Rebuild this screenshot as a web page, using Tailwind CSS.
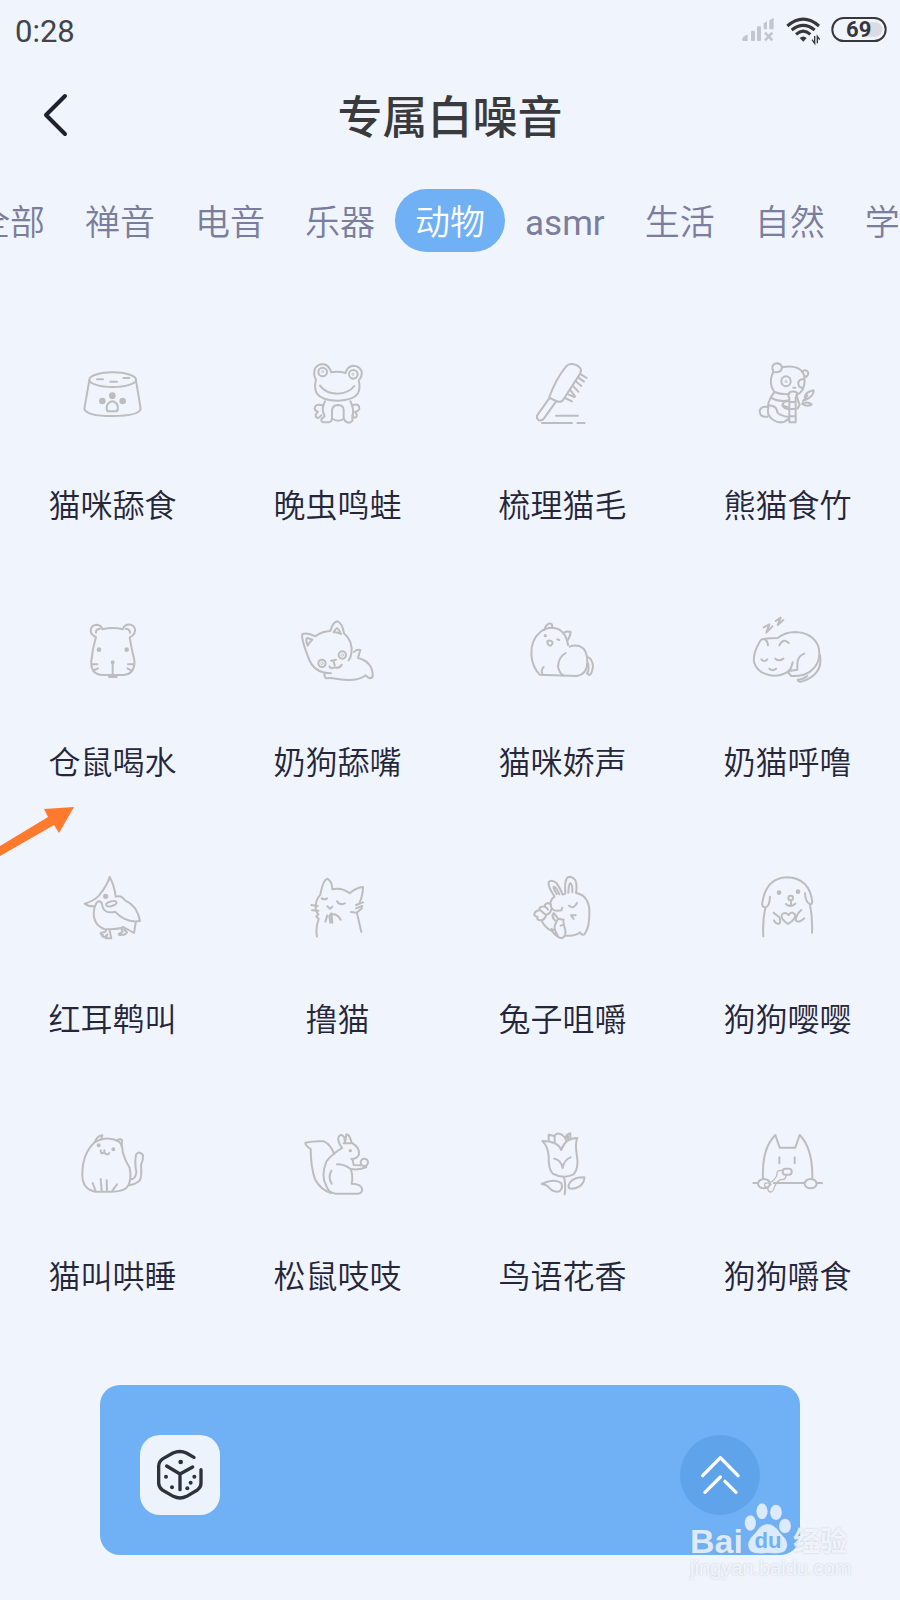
<!DOCTYPE html>
<html lang="zh-CN">
<head>
  <meta charset="UTF-8" />
  <meta name="viewport" content="width=device-width, initial-scale=1" />
  <title>专属白噪音</title>
  <script src="https://cdn.jsdelivr.net/npm/@tailwindcss/browser@4"></script>
</head>
<body class="relative min-h-screen overflow-x-hidden bg-[#f0f4fc] font-['Roboto','Noto_Sans_CJK_SC',sans-serif] text-[#26263a]">

  <!-- status bar -->
  <div class="flex h-[60px] items-center justify-between pl-[15px] pr-[13px]">
    <span class="pt-1 text-[31px] leading-[56px] text-[#444448]">0:28</span>
    <svg class="h-8 w-[147px]" viewBox="870 42 441 96" fill="none">
      <g fill="#c3c6ce">
        <path d="M876 118 Q878 108 893 104 V123 H880 Q876 122 876 118Z" />
        <rect x="903" y="92" width="12" height="31" rx="3" />
        <rect x="921" y="79" width="12" height="44" rx="3" />
        <path d="M941 70 L951 64 V88 H941Z M958 61 L971 53 V88 H958Z" />
      </g>
      <path d="M945 98 L967 121 M967 98 L945 121" stroke="#c3c6ce" stroke-width="8" />
      <g stroke="#37373b" stroke-width="9">
        <path d="M1012 78 Q1060 37 1107 78" />
        <path d="M1025 90 Q1060 62 1094 90" />
        <path d="M1038 103 Q1060 84 1081 103" />
      </g>
      <path d="M1049 114 Q1060 105 1070 114 L1060 125Z" fill="#37373b" />
      <path d="M1094 108 V130 L1086 119 M1102 130 V109 L1109 119" stroke="#37373b" stroke-width="4" />
      <path d="M1250 67 H1276 A21 21 0 0 1 1276 110 H1250Z" fill="#d9dce3" />
      <rect x="1147" y="54" width="160" height="69" rx="34" stroke="#37373b" stroke-width="6" />
      <text x="1226" y="112" text-anchor="middle" font-size="66" font-weight="700" fill="#37373b">69</text>
    </svg>
  </div>

  <header class="relative flex h-28 items-center justify-center border-b-2 border-[#f1f4f8]">
    <button type="button" aria-label="返回" class="absolute left-[35px] flex size-10 items-center justify-center">
      <svg class="h-11 w-7" viewBox="0 0 28 44" fill="none" stroke="#20212f" stroke-width="4" stroke-linecap="round" stroke-linejoin="round">
        <path d="M24 3 L5 22 L24 41" />
      </svg>
    </button>
    <h1 class="pt-2 text-[45px] font-medium text-[#3a3a3c]">专属白噪音</h1>
  </header>

  <nav class="overflow-hidden pt-[17px]">
    <div class="-ml-[45px] flex text-[35px] leading-[57px] font-[350] whitespace-nowrap text-[#7b7d9c]">
      <button type="button" class="shrink-0 px-5 pt-1.5">全部</button>
      <button type="button" class="shrink-0 px-5 pt-1.5">禅音</button>
      <button type="button" class="shrink-0 px-5 pt-1.5">电音</button>
      <button type="button" class="shrink-0 px-5 pt-1.5">乐器</button>
      <button type="button" class="shrink-0 rounded-full bg-[#70b0f4] px-5 pt-1.5 text-white">动物</button>
      <button type="button" class="shrink-0 px-5 pt-1.5 font-normal">asmr</button>
      <button type="button" class="shrink-0 px-5 pt-1.5">生活</button>
      <button type="button" class="shrink-0 px-5 pt-1.5">自然</button>
      <button type="button" class="shrink-0 px-5 pt-1.5">学习</button>
    </div>
  </nav>

  <main class="mt-[102px] grid grid-cols-4 gap-y-[81px] text-[32px] leading-[48px] font-[350]">

    <button type="button" class="flex flex-col items-center gap-[48px]">
      <svg class="size-20" viewBox="69 42 240 240" fill="none" stroke="#bdbdbf" stroke-width="6" stroke-linecap="round" stroke-linejoin="round">
        <ellipse cx="188" cy="119" rx="70" ry="22" />
        <path d="M118 121 L103 206 Q108 228 188 228 Q268 228 272 206 L258 121" />
        <path d="M141 118 H159 M181 125 H201 M220 114 H238" />
        <g fill="#bdbdbf"><circle cx="187" cy="167" r="7" /><circle cx="157" cy="183" r="7" /><circle cx="218" cy="183" r="7" /></g>
        <path d="M173 214 Q167 206 172 194 Q180 184 187 184 Q194 184 202 194 Q206 206 201 214 Z" />
      </svg>
      <span>猫咪舔食</span>
    </button>

    <button type="button" class="flex flex-col items-center gap-[48px]">
      <svg class="size-20" viewBox="744 42 240 240" fill="none" stroke="#bdbdbf" stroke-width="6" stroke-linecap="round" stroke-linejoin="round">
        <path d="M798 120 Q788 100 796 84 Q806 70 822 73 Q839 77 843 97 Q864 92 887 99 Q891 79 909 77 Q928 77 935 94 Q937 110 926 121 Q932 141 924 160 Q911 181 864 182 Q816 182 801 161 Q791 143 798 120Z" />
        <circle cx="818" cy="96" r="13" /><circle cx="910" cy="103" r="13" />
        <circle cx="818" cy="95" r="1" /><circle cx="909" cy="103" r="1" />
        <path d="M810 137 Q828 161 861 161 Q896 160 913 138" />
        <path d="M825 184 Q812 208 824 229 L814 238 Q813 247 822 247 H836 Q847 245 846 232 V209 Q849 195 865 195 Q881 196 881 211 V234 Q884 247 898 248 Q910 246 907 233 Q914 207 901 184" />
        <path d="M848 237 Q865 247 881 237" />
        <path d="M817 196 Q794 190 794 206 Q795 213 804 215 Q793 225 799 232 Q807 237 814 226 M910 195 Q929 190 928 206 Q926 213 915 216 Q924 226 918 232 Q910 235 907 226" />
      </svg>
      <span>晚虫鸣蛙</span>
    </button>

    <button type="button" class="flex flex-col items-center gap-[48px]">
      <svg class="size-20" viewBox="69 42 240 240" fill="none" stroke="#bdbdbf" stroke-width="6" stroke-linecap="round" stroke-linejoin="round">
        <path d="M148 171 Q168 116 198 80 Q206 70 217 72 Q235 75 242 86 Q245 92 239 103 L191 177 Q184 190 168 183 L148 173" />
        <path d="M147 176 L111 227 Q109 236 117 241 Q126 243 132 235 L166 187" />
        <path d="M243 103 L260 114 M234 112 L252 125 M226 123 L244 138 M218 137 L235 155 M210 149 L225 169 M195 174 L216 184 M204 163 L223 171" />
        <path d="M168 227 H234 M126 249 H216 M232 249 H254" />
      </svg>
      <span>梳理猫毛</span>
    </button>

    <button type="button" class="flex flex-col items-center gap-[48px]">
      <svg class="size-20" viewBox="744 42 240 240" fill="none" stroke="#bdbdbf" stroke-width="6" stroke-linecap="round" stroke-linejoin="round">
        <path d="M819 97 Q804 130 823 156 Q842 164 868 162 M846 82 Q889 73 909 97 Q919 120 909 147 Q902 160 892 163" />
        <path d="M820 95 Q812 77 825 71 Q841 67 846 82 Q845 95 830 97 Q821 97 820 95Z M906 96 Q913 87 922 93 Q928 101 920 110 L914 109" />
        <ellipse cx="858" cy="124" rx="14" ry="15" /><circle cx="858" cy="125" r="1" />
        <path d="M912 118 Q894 116 895 133 Q897 143 908 144 M880 143 H886" />
        <path d="M867 158 Q879 151 891 158 V168 L887 172 V247 H868 V174 L865 168Z M871 186 H886 M871 207 H886 M871 229 H886" />
        <path d="M822 158 L812 173 Q838 188 867 181 M812 174 Q802 190 805 204 Q798 225 820 240 Q845 256 866 236 M805 202 Q803 193 819 198 Q831 203 832 217 Q844 229 865 230 M867 183 Q849 183 847 196 Q852 207 867 207 M848 196 L867 203" />
        <path d="M803 201 Q784 197 779 212 Q779 228 793 230 H803 M889 164 L897 190 M893 205 L899 194" />
        <path d="M909 183 L922 166 M915 180 Q910 157 941 151 Q942 169 915 180Z M906 191 Q923 183 935 193 Q923 202 906 191Z" />
      </svg>
      <span>熊猫食竹</span>
    </button>

    <button type="button" class="relative flex flex-col items-center gap-[48px]">
      <svg class="size-20" viewBox="69 33 240 240" fill="none" stroke="#bdbdbf" stroke-width="6" stroke-linecap="round" stroke-linejoin="round">
        <path d="M158 88 Q188 80 218 88 Q224 72 242 74 Q257 80 255 94 Q252 107 239 112 Q244 144 253 180 Q256 222 220 225 H155 Q121 222 124 182 Q128 143 138 111 Q122 105 122 91 Q123 76 139 74 Q154 75 158 88Z" />
        <path d="M138 98 Q136 88 150 86 M227 86 Q240 87 240 98" />
        <g fill="#bdbdbf"><circle cx="147" cy="149" r="4" /><circle cx="230" cy="149" r="4" /><circle cx="188" cy="187" r="3" /></g>
        <path d="M188 190 V222 M126 193 H142 M133 210 L144 205 M252 193 H234 M244 211 L232 205" />
        <path d="M178 230 H199" stroke-width="8" />
      </svg>
      <span>仓鼠喝水</span>
      <!-- arrow pointing at the selected sound -->
      <svg class="absolute left-0 top-[194px] h-[54px] w-20" viewBox="0 0 80 54" fill="#ff7a2c" aria-hidden="true">
        <path d="M74 2 L44 4 L48 12 L0 41 V51 L54 20 L59 28Z" />
      </svg>
    </button>

    <button type="button" class="flex flex-col items-center gap-[48px]">
      <svg class="size-20" viewBox="744 33 240 240" fill="none" stroke="#bdbdbf" stroke-width="6" stroke-linecap="round" stroke-linejoin="round">
        <path d="M843 220 Q790 220 774 170 Q753 115 757 102 Q773 97 796 109 Q815 94 841 93 Q849 65 863 64 Q877 70 882 100 Q910 125 904 161 Q902 175 896 181" />
        <path d="M773 137 Q765 116 772 114 L787 119 Q778 126 773 137Z M851 97 Q858 84 862 85 Q869 91 873 102 Q863 96 851 97Z" />
        <circle cx="816" cy="190" r="11" /><circle cx="877" cy="165" r="11" /><circle cx="816" cy="190" r="4" stroke-width="2" /><circle cx="877" cy="165" r="4" stroke-width="2" />
        <path d="M843 182 L858 179 M850 181 L854 196 M838 199 Q842 208 854 202 Q870 207 875 194" />
        <path d="M912 156 Q918 148 931 150 L924 174 Q951 180 963 202 Q971 222 967 232 Q957 239 947 226 Q920 247 863 237 Q838 232 829 235 Q821 230 824 221" />
      </svg>
      <span>奶狗舔嘴</span>
    </button>

    <button type="button" class="flex flex-col items-center gap-[48px]">
      <svg class="size-20" viewBox="69 33 240 240" fill="none" stroke="#bdbdbf" stroke-width="6" stroke-linecap="round" stroke-linejoin="round">
        <path d="M204 135 Q201 103 177 88 Q147 75 121 96 Q92 120 94 163 Q96 199 119 224 L230 228 Q262 223 262 187 Q263 148 240 139 Q223 134 209 140" />
        <path d="M133 90 Q140 68 153 71 Q158 73 156 84 M193 97 Q202 92 212 96 Q210 110 204 119" />
        <path d="M197 159 Q176 171 174 199 Q178 220 191 227 M131 201 Q122 209 127 223 M261 170 Q278 175 279 200 Q276 220 269 225 L261 221 Q269 210 264 190" />
        <circle cx="136" cy="107" r="2" /><path d="M172 118 L178 120 M142 124 Q150 118 158 127 Q156 137 150 137 Q142 135 142 124Z" />
      </svg>
      <span>猫咪娇声</span>
    </button>

    <button type="button" class="flex flex-col items-center gap-[48px]">
      <svg class="size-20" viewBox="744 33 240 240" fill="none" stroke="#bdbdbf" stroke-width="6" stroke-linecap="round" stroke-linejoin="round">
        <path d="M878 187 Q872 226 821 227 Q775 224 762 187 Q759 160 776 131 Q783 116 790 117 Q808 114 833 114 Q856 96 886 96 Q938 98 955 139 Q967 188 931 214 Q909 230 874 228 L865 219 Q871 214 878 187Z" />
        <path d="M792 118 Q803 121 804 136 M838 136 Q851 112 866 129 M913 161 Q893 168 892 191 V209 L873 212" />
        <path d="M784 178 Q793 188 802 178 M826 176 Q837 186 850 176 M808 206 Q818 215 828 206" />
        <path d="M960 166 Q970 224 904 245 Q894 246 893 239 Q907 239 922 228" />
        <path d="M791 82 L808 73 L799 98 L817 79 M827 63 L842 53 L833 75 L850 60" />
      </svg>
      <span>奶猫呼噜</span>
    </button>

    <button type="button" class="flex flex-col items-center gap-[48px]">
      <svg class="size-20" viewBox="69 24 240 240" fill="none" stroke="#bdbdbf" stroke-width="6" stroke-linecap="round" stroke-linejoin="round">
        <path d="M104 131 Q130 124 147 107 Q174 72 179 51 Q194 79 197 110 Q215 104 225 121 Q262 137 270 183 Q228 190 195 155 Q160 164 156 132 Q154 124 146 124 Q140 125 135 139 Q115 140 104 131Z" />
        <path d="M134 140 Q122 189 162 207 Q204 209 220 201 L252 219 L257 188" />
        <circle cx="167" cy="109" r="5" fill="#bdbdbf" /><ellipse cx="184" cy="131" rx="16" ry="7" transform="rotate(-15 184 131)" />
        <path d="M168 211 Q168 218 153 218 Q149 224 159 225 Q153 232 164 231 L172 223 L167 235 H184 L179 211 M214 205 L218 215 L206 222 Q209 228 216 223 Q224 228 231 217 L222 207" />
      </svg>
      <span>红耳鹎叫</span>
    </button>

    <button type="button" class="flex flex-col items-center gap-[48px]">
      <svg class="size-20" viewBox="744 24 240 240" fill="none" stroke="#bdbdbf" stroke-width="6" stroke-linecap="round" stroke-linejoin="round">
        <path d="M811 103 Q819 59 832 56 Q846 63 847 88 Q876 82 899 100 Q920 82 939 81 Q938 109 929 127 M811 104 Q797 119 797 142 Q795 151 805 163 L799 169 L806 177 Q796 206 801 230 M921 160 L934 216" />
        <path d="M784 135 L803 138 M786 151 L805 152 M918 135 L939 127 M918 145 L937 138 M903 156 L920 158 L936 145" />
        <path d="M815 115 Q823 121 831 115 M861 124 Q868 137 885 130 M832 139 L840 146 L847 140" />
        <path d="M826 185 L832 166 M841 188 L838 169 L844 160 L847 188 M849 163 Q863 163 872 179" />
      </svg>
      <span>撸猫</span>
    </button>

    <button type="button" class="flex flex-col items-center gap-[48px]">
      <svg class="size-20" viewBox="69 24 240 240" fill="none" stroke="#bdbdbf" stroke-width="6" stroke-linecap="round" stroke-linejoin="round">
        <path d="M163 108 Q144 82 146 66 Q155 57 170 70 Q182 87 188 104 L196 101 Q193 64 202 53 Q215 46 226 60 Q232 77 228 99 Q263 105 268 147 Q270 202 254 222 Q246 228 240 217 Q225 230 197 227" />
        <path d="M170 102 Q157 81 162 80 Q170 83 178 103 M205 98 Q206 73 211 69 Q218 74 217 97" />
        <path d="M163 110 Q146 122 154 143 Q160 156 184 151 L187 143 M207 137 Q221 149 231 129" />
        <path d="M152 133 Q144 125 135 134 L135 140 Q119 136 117 151 Q102 154 103 166 Q108 169 113 171 Q108 181 124 181 Q134 180 139 164 Q151 162 154 148 M121 151 L135 163 M137 141 L144 149" />
        <path d="M126 184 Q135 203 157 214 Q167 229 184 235 Q201 229 195 207 Q188 183 191 179 L175 176 Q168 185 164 198 Q162 210 173 225 M161 159 Q153 169 165 181 M162 160 L175 177 M182 197 L190 194 M154 207 L164 211" />
        <path d="M227 166 H213 L221 177" />
      </svg>
      <span>兔子咀嚼</span>
    </button>

    <button type="button" class="flex flex-col items-center gap-[48px]">
      <svg class="size-20" viewBox="744 24 240 240" fill="none" stroke="#bdbdbf" stroke-width="6" stroke-linecap="round" stroke-linejoin="round">
        <path d="M790 229 Q787 184 796 143 Q784 139 787 128 Q798 54 861 52 Q928 54 937 126 Q935 134 930 133 Q916 126 915 100 M810 110 Q808 141 797 142 M930 134 Q938 174 936 218" />
        <g fill="#bdbdbf"><circle cx="837" cy="98" r="4" /><circle cx="894" cy="95" r="4" /></g>
        <circle cx="872" cy="114" r="7" /><path d="M873 122 V138 M858 132 Q871 144 886 131" />
        <path d="M864 192 Q839 175 846 163 Q855 154 866 165 Q876 151 885 164 Q888 177 864 192Z" />
        <path d="M821 158 L838 172 M822 181 Q828 194 838 191 Q843 184 839 174 M904 150 Q889 162 887 181 Q896 191 913 175" />
      </svg>
      <span>狗狗嘤嘤</span>
    </button>

    <button type="button" class="flex flex-col items-center gap-[48px]">
      <svg class="size-20" viewBox="69 30 240 240" fill="none" stroke="#bdbdbf" stroke-width="6" stroke-linecap="round" stroke-linejoin="round">
        <path d="M134 82 Q171 60 207 80 Q219 92 218 111 Q224 135 239 159 Q247 198 230 218 Q218 230 184 230 H137 Q98 225 97 181 Q96 117 134 82Z" />
        <path d="M134 81 Q144 61 157 61 L154 72 M201 76 Q211 70 216 75 L215 96" />
        <g fill="#bdbdbf"><circle cx="146" cy="91" r="3" /><circle cx="190" cy="103" r="3" /></g>
        <path d="M152 106 Q152 119 163 112 Q171 124 178 114 M163 106 V111" />
        <path d="M128 204 L136 226 M152 192 L155 226 M170 196 L171 226 M201 208 L187 227" />
        <path d="M243 193 Q256 193 259 172 Q253 136 259 117 Q271 107 279 121 Q280 136 273 150 Q276 186 269 197 Q255 208 238 211" />
      </svg>
      <span>猫叫哄睡</span>
    </button>

    <button type="button" class="flex flex-col items-center gap-[48px]">
      <svg class="size-20" viewBox="744 30 240 240" fill="none" stroke="#bdbdbf" stroke-width="6" stroke-linecap="round" stroke-linejoin="round">
        <path d="M853 117 Q841 88 822 79 Q794 77 766 83 Q766 91 782 102 Q782 154 795 193 Q811 224 843 234" />
        <path d="M876 99 Q841 121 829 140 Q812 183 829 213 Q837 234 857 236 H925 Q938 235 936 220 Q932 207 905 206 Q910 184 902 162 Q884 148 861 148" />
        <path d="M876 99 Q861 77 866 65 Q873 54 883 67 L885 83 L889 59 Q897 54 905 83 Q930 99 927 118 Q921 132 904 132 M881 85 H905 M908 135 L911 150 L932 151 M902 162 Q930 166 949 156" />
        <circle cx="943" cy="142" r="11" /><circle cx="901" cy="107" r="2" fill="#bdbdbf" />
        <path d="M844 167 Q833 187 845 206" />
      </svg>
      <span>松鼠吱吱</span>
    </button>

    <button type="button" class="flex flex-col items-center gap-[48px]">
      <svg class="size-20" viewBox="69 30 240 240" fill="none" stroke="#bdbdbf" stroke-width="6" stroke-linecap="round" stroke-linejoin="round">
        <path d="M127 78 Q149 78 163 84 Q178 91 184 105 Q195 69 232 69 Q225 83 230 118 Q238 158 221 178 Q189 193 158 176 Q145 163 146 124 Q144 94 127 78Z" />
        <path d="M146 77 V59 L163 63 M164 83 V62 Q168 54 178 56 Q193 61 198 75 M197 71 Q197 59 211 55 V70 M204 64 L204 72" />
        <path d="M163 131 Q182 133 188 159 Q193 133 212 127 M192 187 Q198 209 194 238" />
        <path d="M125 207 Q166 189 184 205 Q190 220 178 229 Q161 233 150 221 Q140 208 125 207Z M253 187 Q222 187 211 201 Q202 213 208 220 Q225 224 242 212 Q254 199 253 187Z" />
      </svg>
      <span>鸟语花香</span>
    </button>

    <button type="button" class="flex flex-col items-center gap-[48px]">
      <svg class="size-20" viewBox="744 30 240 240" fill="none" stroke="#bdbdbf" stroke-width="6" stroke-linecap="round" stroke-linejoin="round">
        <path d="M789 190 Q785 101 826 60 L839 98 H886 L899 60 Q938 99 937 188" />
        <path d="M838 127 V145 M884 127 V145" />
        <rect x="848" y="161" width="27" height="18" rx="8" />
        <path d="M760 204 H773 M821 204 H913 M951 204 H966" />
        <ellipse cx="792" cy="206" rx="18" ry="14" /><ellipse cx="932" cy="206" rx="18" ry="14" />
        <path d="M845 166 Q830 165 831 177 Q830 190 813 201 M858 182 Q858 194 842 194 Q827 202 824 215 Q819 232 811 231 Q802 229 804 218 Q791 215 794 207 Q800 200 813 208" stroke-width="4" />
      </svg>
      <span>狗狗嚼食</span>
    </button>
  </main>

  <!-- mixer bar -->
  <section class="mx-[100px] mt-[84px] mb-[45px] flex h-[170px] items-center justify-between rounded-[20px] bg-[#70b0f4] px-10 pt-2.5">
    <button type="button" aria-label="随机" class="flex size-20 items-center justify-center rounded-[20px] bg-[#ecf3fc]">
      <svg class="size-[54px]" viewBox="220 234 162 162" fill="none" stroke="#2e303c" stroke-width="10" stroke-linecap="round" stroke-linejoin="round">
        <path d="M343 262 L320 249 Q301 240 280 249 L250 266 Q238 274 237 288 V340 Q238 352 248 360 L281 379 Q301 389 321 379 L353 360 Q364 352 364 340 V299" />
        <path d="M261 288 L301 312 L339 291 M301 312 V359" />
        <g fill="#2e303c" stroke="none"><circle cx="303" cy="276" r="7" /><circle cx="259" cy="320" r="6" /><circle cx="277" cy="352" r="6" /><circle cx="344" cy="320" r="6" /><circle cx="333" cy="338" r="6" /><circle cx="323" cy="355" r="6" /></g>
      </svg>
    </button>
    <button type="button" aria-label="展开" class="flex size-20 items-center justify-center rounded-full bg-[#5fa4ea]">
      <svg class="size-10" viewBox="298 255 120 120" fill="none" stroke="#fff" stroke-width="10" stroke-linecap="round" stroke-linejoin="round">
        <path d="M306 317 L359 263 L412 317 M313 367 L359 321 M373 334 L406 367" />
      </svg>
    </button>
  </section>

  <!-- watermark -->
  <div class="absolute right-[48px] bottom-[18px] w-[162px] font-['Liberation_Sans','Noto_Sans_CJK_SC',sans-serif] text-white/75 [text-shadow:0_0_2px_#8fa3bd88]">
    <div class="flex h-[52px] items-end leading-[26px] font-bold">
      <span class="text-[34px]">Bai</span>
      <span class="relative h-[52px] w-[50px] shrink-0">
        <svg class="size-full" viewBox="432 398 150 156" fill="#fff" fill-opacity=".75" stroke="#8fa3bd" stroke-opacity=".3" stroke-width="2">
          <ellipse cx="454" cy="461" rx="17" ry="23" />
          <ellipse cx="489" cy="426" rx="17" ry="24" />
          <ellipse cx="531" cy="429" rx="18" ry="23" />
          <ellipse cx="558" cy="470" rx="18" ry="22" />
          <path d="M506 464 Q526 465 541 488 L559 508 Q572 530 557 546 Q545 555 506 551 Q468 556 454 545 Q440 528 455 506 L472 487 Q487 465 506 464Z" />
        </svg>
        <span class="absolute inset-x-0 bottom-0 text-center text-[22px] text-[#70b0f4] [text-shadow:none]">du</span>
      </span>
      <span class="text-[27px] leading-[24px] whitespace-nowrap">经验</span>
    </div>
    <div class="text-[20px] leading-7">jingyan.baidu.com</div>
  </div>
</body>
</html>
